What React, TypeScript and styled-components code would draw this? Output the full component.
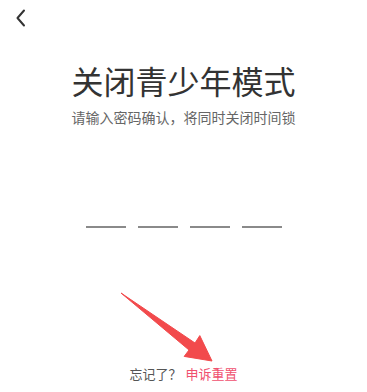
import React from "react";
import styled, { createGlobalStyle } from "styled-components";

const Global = createGlobalStyle`
  html, body { margin: 0; padding: 0; background: #ffffff; }
  body { font-family: "Noto Sans CJK SC", "Noto Sans", sans-serif; }
`;

const Page = styled.div`
  position: relative;
  width: 367px;
  height: 392px;
  background: #ffffff;
  display: flex;
  flex-direction: column;
  align-items: center;
  overflow: hidden;
`;

const TopBar = styled.div`
  align-self: stretch;
  height: 36px;
  display: flex;
  align-items: center;
  padding-left: 14px;
`;

const BackButton = styled.button`
  border: none;
  background: none;
  padding: 0;
  width: 14px;
  height: 20px;
  display: flex;
  align-items: center;
  justify-content: center;
  margin-top: -1px;
`;

const Title = styled.h1`
  margin: 28px 0 0;
  font-size: 32px;
  line-height: 32px;
  font-weight: 400;
  color: #333333;
  letter-spacing: 0;
`;

const Subtitle = styled.p`
  margin: 14px 0 0;
  font-size: 14px;
  line-height: 14px;
  color: #666666;
`;

const CodeRow = styled.div`
  margin-top: 102px;
  display: flex;
  gap: 12px;
`;

const CodeSlot = styled.div`
  width: 40px;
  height: 2px;
  background: #8a8a8a;
`;

const Footer = styled.div`
  margin-top: auto;
  margin-bottom: 12px;
  font-size: 13px;
  line-height: 13px;
  color: #555555;
`;

const ResetLink = styled.span`
  color: #f0506e;
  margin-left: 4px;
`;

const ArrowMark = styled.svg`
  position: absolute;
  left: 0;
  top: 0;
  pointer-events: none;
`;

export default function App() {
  return (
    <>
      <Global />
      <Page>
        <TopBar>
          <BackButton aria-label="返回">
            <svg width="12" height="18" viewBox="0 0 12 18">
              <polyline
                points="9,1.5 2.5,9 9,16.5"
                fill="none"
                stroke="#333"
                strokeWidth="2"
                strokeLinecap="round"
                strokeLinejoin="round"
              />
            </svg>
          </BackButton>
        </TopBar>
        <Title>关闭青少年模式</Title>
        <Subtitle>请输入密码确认，将同时关闭时间锁</Subtitle>
        <CodeRow>
          <CodeSlot />
          <CodeSlot />
          <CodeSlot />
          <CodeSlot />
        </CodeRow>
        <Footer>
          忘记了？<ResetLink>申诉重置</ResetLink>
        </Footer>
        <ArrowMark width="367" height="392" viewBox="0 0 367 392">
          <polygon
            points="121,293 195,343 199.8,335.6 212,361 184.2,356.4 189,350"
            fill="#f24a4c"
            stroke="#f24a4c"
            strokeWidth="1"
            strokeLinejoin="round"
          />
        </ArrowMark>
      </Page>
    </>
  );
}
